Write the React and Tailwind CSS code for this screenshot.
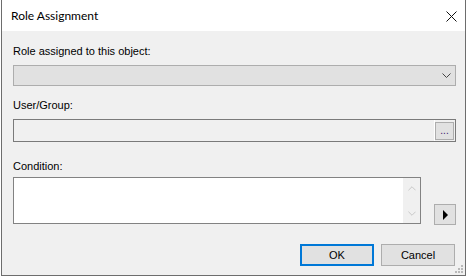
import React from 'react';

function Label({ children, className = '' }) {
  return <div className={`text-[11px] leading-[13px] text-black ${className}`}>{children}</div>;
}

function Chevron({ className = '', up = false, color = '#555' }) {
  return (
    <svg width="9" height="5" viewBox="0 0 9 5" className={className}>
      <polyline
        points={up ? '0.5,4.5 4.5,0.5 8.5,4.5' : '0.5,0.5 4.5,4.5 8.5,0.5'}
        fill="none"
        stroke={color}
        strokeWidth="1"
      />
    </svg>
  );
}

export default function App() {
  return (
    <div className="w-[467px] h-[278px] bg-white overflow-hidden" style={{ fontFamily: '"Liberation Sans", Arial, sans-serif' }}>
      <div className="relative ml-[1px] w-[465px] h-[276px] border border-t-0 border-[#6d6d6d] flex flex-col">
        {/* title bar */}
        <div className="h-[31px] bg-white flex items-center justify-between pl-[9px] pr-[8px]">
          <span className="text-[12px] text-black pt-[1px]" style={{ fontFamily: 'Lato, "Liberation Sans", sans-serif' }}>
            Role Assignment
          </span>
          <svg width="11" height="11" viewBox="0 0 11 11" className="mt-[1px]">
            <path d="M0.5 0.5 L10.5 10.5 M10.5 0.5 L0.5 10.5" stroke="#111" strokeWidth="1" />
          </svg>
        </div>

        {/* body */}
        <div className="flex-1 bg-[#f0f0f0] pl-[11px] pr-[9px] pt-[14px] flex flex-col">
          <Label>Role assigned to this object:</Label>
          <div className="mt-[7px] h-[21px] border border-[#adadad] bg-[#e1e1e1] flex items-center justify-end pr-[4px]">
            <Chevron color="#444" />
          </div>

          <Label className="mt-[13px]">User/Group:</Label>
          <div className="mt-[7px] h-[23px] border border-[#7a7a7a] bg-[#f0f0f0] flex items-center justify-end pr-[1px]">
            <div className="w-[1px] h-full bg-white" />
            <button className="w-[19px] h-[18px] border border-[#adadad] bg-[#e1e1e1] flex items-end justify-center pb-[3px] text-[10px] leading-[10px] text-[#3a1a6a]">
              ...
            </button>
          </div>

          <Label className="mt-[18px]">Condition:</Label>
          <div className="mt-[4px] flex items-start">
            <div className="w-[408px] h-[47px] border border-[#828282] bg-white flex justify-end">
              <div className="w-[17px] h-full bg-[#f0f0f0] flex flex-col items-center justify-between pt-[8px] pb-[7px]">
                <Chevron up color="#c2c2c2" className="w-[8px]" />
                <Chevron color="#c2c2c2" className="w-[8px]" />
              </div>
            </div>
            <button className="ml-[13px] mt-[27px] w-[22px] h-[21px] border border-[#adadad] bg-[#e1e1e1] flex items-center justify-center">
              <svg width="5" height="10" viewBox="0 0 5 10">
                <polygon points="0,0 5,5 0,10" fill="#000" />
              </svg>
            </button>
          </div>

          <div className="mt-[19px] flex justify-end gap-[7px] pr-[1px]">
            <button className="w-[74px] h-[22px] border-2 border-[#0078d7] bg-[#e1e1e1] text-[11px] text-black">
              OK
            </button>
            <button className="w-[74px] h-[22px] border border-[#adadad] bg-[#e1e1e1] text-[11px] text-black">
              Cancel
            </button>
          </div>
        </div>

        {/* resize grip */}
        <svg width="10" height="10" viewBox="0 0 10 10" className="absolute right-[1px] bottom-[1px]">
          {[[7, 1], [4, 4], [7, 4], [1, 7], [4, 7], [7, 7]].map(([x, y]) => (
            <rect key={`${x}-${y}`} x={x} y={y} width="2" height="2" fill="#b8b8b8" />
          ))}
        </svg>
      </div>
    </div>
  );
}
